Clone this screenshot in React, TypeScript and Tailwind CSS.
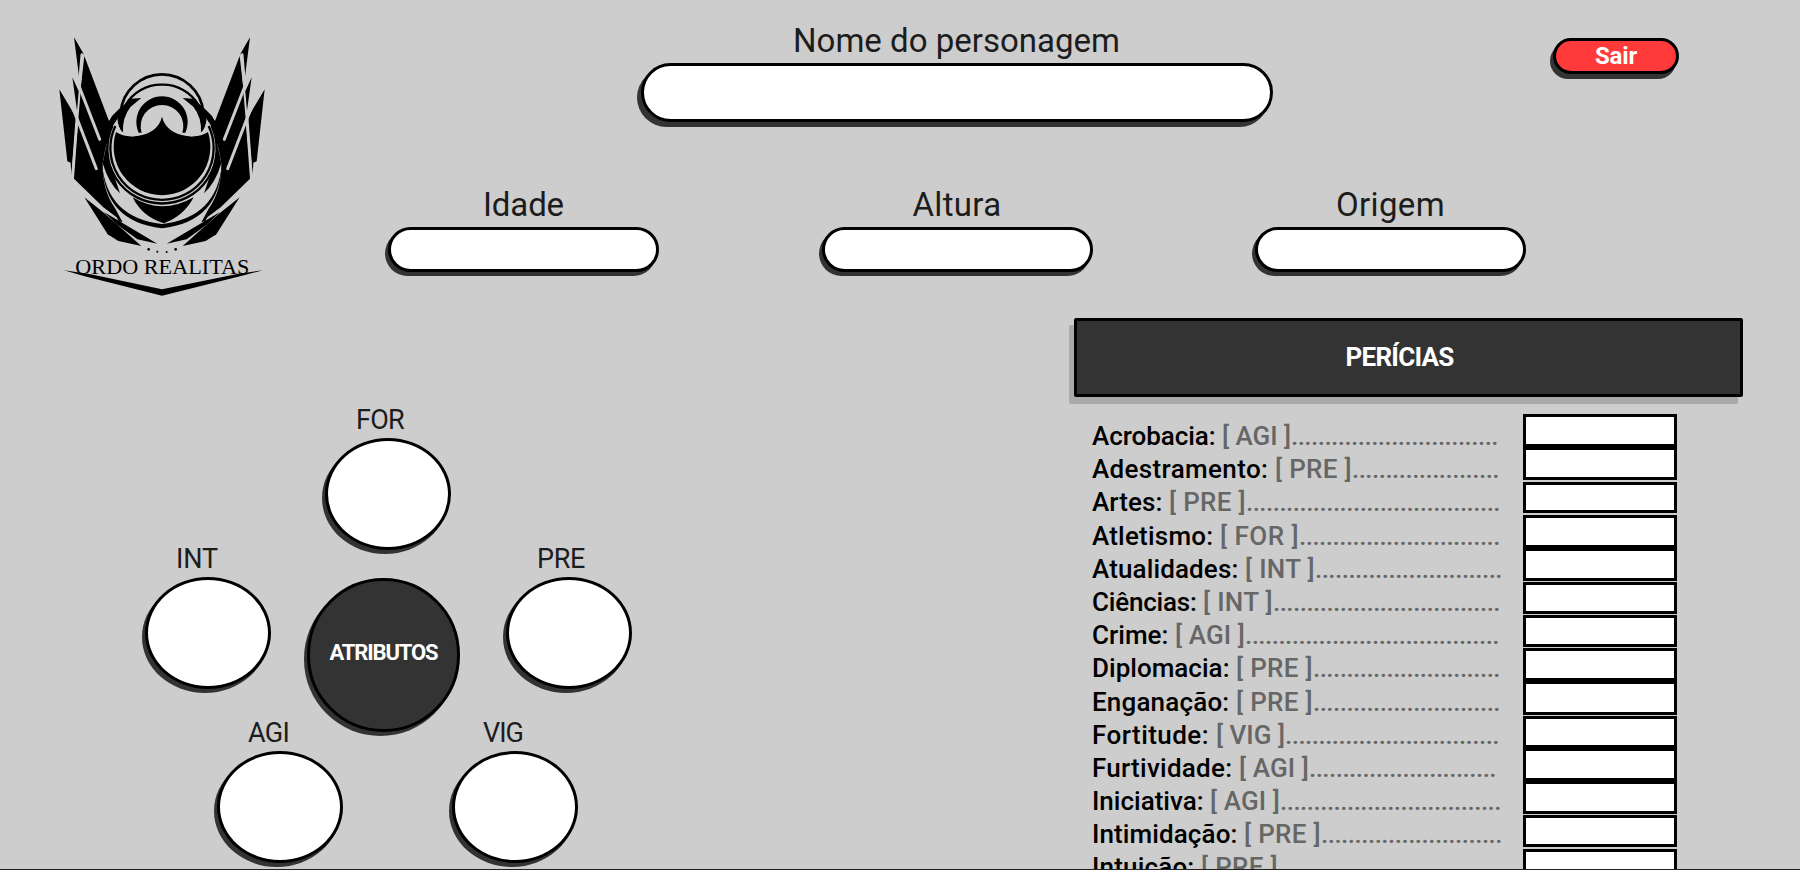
import { useLayoutEffect, useRef, type ReactNode } from "react";

/** Text whose letter spacing is adjusted so that the line fills `width` pixels. */
function Fit({ width, className = "", children }: { width: number; className?: string; children: ReactNode }) {
  const box = useRef<HTMLSpanElement>(null);
  useLayoutEffect(() => {
    const el = box.current;
    if (!el) return;
    el.style.letterSpacing = "0px";
    const count = (el.textContent ?? "").length;
    el.style.letterSpacing = `${(width - el.getBoundingClientRect().width) / count}px`;
  }, [width, children]);
  return (
    <span ref={box} className={`inline-block whitespace-pre ${className}`}>
      {children}
    </span>
  );
}

function WingHalf() {
  return (
    <g>
      <path d="M102 52 L131 102 L124 118 L119 186 L110 115 Z" />
      <path d="M133 108 L207 303 L244 268 L262 262 Q222 300 207 345 Q194 390 188 430 Q186 510 226 566 L246 604 L190 562 L102 476 L115 300 L97 172 L120 222 Z" />
      <path d="M58 208 L107 290 L94 466 L92 428 L82 424 Z" />
      <path d="M126 104 L118 200 L179 358" fill="none" stroke="#cdcdcd" strokeWidth="9" strokeLinecap="round" />
      <path d="M98 264 L112 298 L169 446" fill="none" stroke="#cdcdcd" strokeWidth="9" strokeLinecap="round" />
      <path d="M119 215 L110 320 L97 466" fill="none" stroke="#cdcdcd" strokeWidth="6" />
      <path d="M199 376 L205 418 L240 520 Q206 490 188 430 Z" />
      <path d="M304 234 L274 236 L240 264 L216 288 L206 306 L202 350 Q212 318 228 304 L232 290 Q232 320 249 340 Q246 292 272 260 Z" />
      <path d="M133 532 L196 582 L304 678 L235 663 L203 643 Z" />
      <path d="M192 576 L352 671 L292 658 L232 614 Z" />
      <path d="M216 562 L236 604 L248 606 Z" />
    </g>
  );
}

function Logo() {
  return (
    <svg viewBox="0 0 720 870" className="h-[290px] w-[240px] shrink-0" fill="#000" aria-label="Ordo Realitas">
      <WingHalf />
      <g transform="translate(732 0) scale(-1 1)">
        <WingHalf />
      </g>
      <g fill="none" stroke="#000">
        <path d="M242 276 A125 125 0 0 1 366 163 A125 125 0 0 1 490 276" strokeWidth="8" />
        <path d="M256 256 A124 124 0 0 1 366 194 A124 124 0 0 1 476 256" strokeWidth="7" />
        <path d="M217 318 A164 164 0 1 0 515 318" strokeWidth="7" />
        <path d="M226 318 A155 155 0 1 0 506 318" strokeWidth="7" />
      </g>
      <path d="M296 338 A77 77 0 1 1 436 338 L427 338 A64 64 0 1 0 305 338 Z" />
      <path d="M228 336 Q250 352 292 348 Q354 338 366 290 Q378 338 440 348 Q482 352 504 336 A145 145 0 1 1 228 336 Z" />
      <path d="M231 304 Q232 348 282 347 M501 304 Q500 348 450 347" fill="none" stroke="#cdcdcd" strokeWidth="5" />
      <path d="M278 532 Q366 586 461 532 Q430 590 371 610 Q306 590 278 532 Z" />
      <path d="M186 430 Q192 606 366 625 Q540 606 546 430 Q532 594 366 612 Q200 594 186 430 Z" />
      <circle cx="326" cy="688" r="4" />
      <circle cx="352" cy="695" r="3" />
      <circle cx="380" cy="696" r="3" />
      <circle cx="407" cy="688" r="4" />
      <text x="106" y="762" textLength="522" lengthAdjust="spacingAndGlyphs" fontSize="66" fontFamily="'Liberation Serif', serif">
        ORDO REALITAS
      </text>
      <path d="M72 751 L148 762 L366 808 L592 762 L668 751 L600 769 L366 827 L134 769 Z" />
    </svg>
  );
}

const pill = "border-[3px] border-black bg-white outline-none shadow-[-3px_4px_0_#333]";

function Field({ label, width, ml }: { label: string; width: number; ml: string }) {
  return (
    <label className="block w-[271px]">
      <span className={`block h-[40px] text-[33px] leading-[39px] text-[#1c1c1c] ${ml}`}>
        <Fit width={width}>{label}</Fit>
      </span>
      <input className={`mt-[2px] block h-[45px] w-full rounded-[23px] px-4 ${pill}`} />
    </label>
  );
}

function Attribute({ label, width, ml, className = "" }: { label: string; width: number; ml: string; className?: string }) {
  return (
    <label className={`block w-[126px] ${className}`}>
      <span className={`block h-[32px] text-[27px] leading-[32px] text-[#1c1c1c] ${ml}`}>
        <Fit width={width}>{label}</Fit>
      </span>
      <input className={`mt-[2px] block h-[112px] w-[126px] rounded-[50%] text-center ${pill}`} />
    </label>
  );
}

type Skill = { name: string; attr: string; nameW: number; attrW: number; dots: number; dotsW: number };

const skills: Skill[] = [
  { name: "Acrobacia:", attr: "[ AGI ]", nameW: 130, attrW: 69, dots: 31, dotsW: 207 },
  { name: "Adestramento:", attr: "[ PRE ]", nameW: 183, attrW: 77, dots: 22, dotsW: 147 },
  { name: "Artes:", attr: "[ PRE ]", nameW: 77, attrW: 77, dots: 38, dotsW: 254 },
  { name: "Atletismo:", attr: "[ FOR ]", nameW: 128, attrW: 79, dots: 30, dotsW: 201 },
  { name: "Atualidades:", attr: "[ INT ]", nameW: 153, attrW: 70, dots: 28, dotsW: 187 },
  { name: "Ciências:", attr: "[ INT ]", nameW: 111, attrW: 70, dots: 34, dotsW: 227 },
  { name: "Crime:", attr: "[ AGI ]", nameW: 83, attrW: 70, dots: 38, dotsW: 254 },
  { name: "Diplomacia:", attr: "[ PRE ]", nameW: 144, attrW: 77, dots: 28, dotsW: 187 },
  { name: "Enganação:", attr: "[ PRE ]", nameW: 144, attrW: 77, dots: 28, dotsW: 187 },
  { name: "Fortitude:", attr: "[ VIG ]", nameW: 124, attrW: 69, dots: 32, dotsW: 214 },
  { name: "Furtividade:", attr: "[ AGI ]", nameW: 147, attrW: 70, dots: 28, dotsW: 187 },
  { name: "Iniciativa:", attr: "[ AGI ]", nameW: 118, attrW: 70, dots: 33, dotsW: 221 },
  { name: "Intimidação:", attr: "[ PRE ]", nameW: 152, attrW: 77, dots: 27, dotsW: 181 },
  { name: "Intuição:", attr: "[ PRE ]", nameW: 109, attrW: 77, dots: 33, dotsW: 221 },
];

const boxes = [
  "h-[33px]",
  "h-[33px]",
  "mt-[2px] h-[31px]",
  "mt-[2px] h-[33px]",
  "h-[33px]",
  "mt-px h-[32px]",
  "mt-px h-[32px]",
  "mt-px h-[33px]",
  "h-[34px]",
  "mt-px h-[32px]",
  "h-[33px]",
  "h-[33px]",
  "mt-px h-[32px]",
  "mt-[2px] h-[33px]",
];

export default function App() {
  return (
    <main className="flex h-[870px] w-[1800px] flex-col overflow-hidden border-b border-[#222] bg-[#cdcdcd] font-['Roboto',sans-serif]">
      <header className="flex h-[318px] shrink-0 items-start pl-[40px]">
        <div className="pt-[20px]">
          <Logo />
        </div>
        <div className="ml-[108px] w-[1138px] pt-[21px]">
          <label className="mx-auto block w-[632px]">
            <span className="block h-[40px] pl-[152px] text-[33px] leading-[39px] text-[#1c1c1c]">
              <Fit width={327}>Nome do personagem</Fit>
            </span>
            <input className="mt-[2px] block h-[59px] w-full rounded-[30px] border-[3px] border-black bg-white px-5 shadow-[-4px_5px_0_#333] outline-none" />
          </label>
          <div className="mt-[63px] flex justify-between">
            <Field label="Idade" width={81} ml="pl-[95px]" />
            <Field label="Altura" width={89} ml="pl-[91px]" />
            <Field label="Origem" width={109} ml="pl-[81px]" />
          </div>
        </div>
        <button className="mt-[38px] ml-[27px] h-[36px] w-[126px] rounded-[18px] border-[3px] border-black bg-[#fe3a3a] text-[24px] leading-[28px] font-bold text-white shadow-[-3px_5px_0_#333]">
          <Fit width={42}>Sair</Fit>
        </button>
      </header>

      <div className="flex min-h-0 flex-1">
        <section className="w-[1074px] shrink-0 pt-[86px]">
          <Attribute label="FOR" width={48} ml="pl-[31px]" className="ml-[325px]" />
          <div className="-mt-[7px] flex items-start pl-[145px]">
            <Attribute label="INT" width={42} ml="pl-[31px]" />
            <div className="mt-[35px] ml-[36px] flex h-[154px] w-[153px] items-center justify-center rounded-full border-[3px] border-black bg-[#333] pb-[4px] text-[22px] leading-[28px] font-bold text-white shadow-[-3px_4px_0_#333]">
              <Fit width={108}>ATRIBUTOS</Fit>
            </div>
            <Attribute label="PRE" width={48} ml="pl-[31px]" className="ml-[46px]" />
          </div>
          <div className="-mt-[15px] flex pl-[217px]">
            <Attribute label="AGI" width={41} ml="pl-[31px]" />
            <Attribute label="VIG" width={40} ml="pl-[31px]" className="ml-[109px]" />
          </div>
        </section>

        <section className="w-[669px] shrink-0">
          <h2 className="flex h-[79px] items-center justify-center rounded-[2px] border-[3px] border-black bg-[#333] pr-[18px] pb-[2px] text-[26px] leading-[32px] font-bold text-white shadow-[-5px_7px_0_#a9a9a9]">
            <Fit width={108}>PERÍCIAS</Fit>
          </h2>
          <div className="flex items-start">
            <ul className="w-[449px] pt-[23px] pl-[18px]">
              {skills.map((s) => (
                <li key={s.name} className="flex h-[33.2px] text-[26px] leading-[33px] font-medium whitespace-nowrap">
                  <Fit width={s.nameW} className="text-black">{s.name + " "}</Fit>
                  <Fit width={s.attrW} className="text-[#666]">{s.attr}</Fit>
                  <Fit width={s.dotsW} className="text-[#666]">{".".repeat(s.dots)}</Fit>
                </li>
              ))}
            </ul>
            <div className="w-[154px] pt-[17px]">
              {boxes.map((size, i) => (
                <input key={i} className={`block w-full border-[3px] border-black bg-white text-center outline-none ${size}`} />
              ))}
            </div>
          </div>
        </section>
      </div>
    </main>
  );
}
